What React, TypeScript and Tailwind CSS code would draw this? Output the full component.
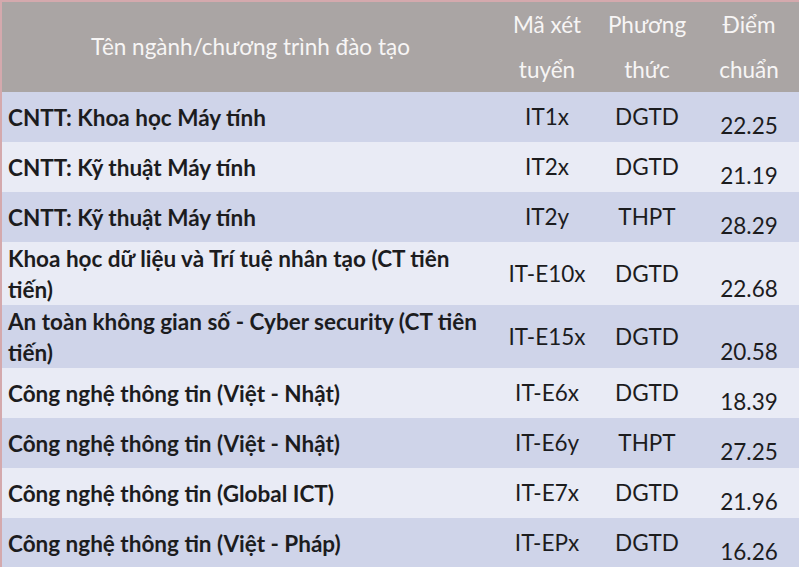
import React from "react";

type Row = { name: React.ReactNode; code: string; method: string; score: string; tall?: boolean };

const rows: Row[] = [
  { name: "CNTT: Khoa học Máy tính", code: "IT1x", method: "DGTD", score: "22.25" },
  { name: "CNTT: Kỹ thuật Máy tính", code: "IT2x", method: "DGTD", score: "21.19" },
  { name: "CNTT: Kỹ thuật Máy tính", code: "IT2y", method: "THPT", score: "28.29" },
  {
    name: (
      <>
        Khoa học dữ liệu và Trí tuệ nhân tạo (CT tiên
        <br />
        tiến)
      </>
    ),
    code: "IT-E10x",
    method: "DGTD",
    score: "22.68",
    tall: true,
  },
  {
    name: (
      <>
        An toàn không gian số - Cyber security (CT tiên
        <br />
        tiến)
      </>
    ),
    code: "IT-E15x",
    method: "DGTD",
    score: "20.58",
    tall: true,
  },
  { name: "Công nghệ thông tin (Việt - Nhật)", code: "IT-E6x", method: "DGTD", score: "18.39" },
  { name: "Công nghệ thông tin (Việt - Nhật)", code: "IT-E6y", method: "THPT", score: "27.25" },
  { name: "Công nghệ thông tin (Global ICT)", code: "IT-E7x", method: "DGTD", score: "21.96" },
  { name: "Công nghệ thông tin (Việt - Pháp)", code: "IT-EPx", method: "DGTD", score: "16.26" },
];

export default function App() {
  return (
    <div
      className="w-[799px] h-[567px] overflow-hidden bg-[#e9ebf5] border-l-2 border-t-2 border-[#d4a9ad] text-[#1c1c1e]"
      style={{ fontFamily: "Lato, 'Open Sans', 'Noto Sans', sans-serif" }}
    >
      <table className="w-[797px] border-collapse table-fixed">
        <colgroup>
          <col className="w-[497px]" />
          <col className="w-[96px]" />
          <col className="w-[104px]" />
          <col className="w-[100px]" />
        </colgroup>
        <thead>
          <tr className="bg-[#aaa5a4] text-[#f7f5f5] h-[90px] text-[22.5px]">
            <th className="font-normal text-center align-middle">Tên ngành/chương trình đào tạo</th>
            <th className="font-normal text-center leading-[45px]">Mã xét<br />tuyển</th>
            <th className="font-normal text-center leading-[45px]">Phương<br />thức</th>
            <th className="font-normal text-center leading-[45px]">Điểm<br />chuẩn</th>
          </tr>
        </thead>
        <tbody className="text-[22.5px]">
          {rows.map((r, i) => (
            <tr
              key={i}
              className={`${i % 2 === 0 ? "bg-[#cfd4e9]" : "bg-[#e9ebf5]"} ${r.tall ? "h-[63px]" : "h-[50px]"}`}
            >
              <td className="pl-[6px] pr-1 font-bold leading-[31px] align-middle whitespace-nowrap">{r.name}</td>
              <td className="text-center align-middle whitespace-nowrap">{r.code}</td>
              <td className="text-center align-middle">{r.method}</td>
              <td className="text-center align-bottom pb-[2px] leading-[28px]">{r.score}</td>
            </tr>
          ))}
        </tbody>
      </table>
    </div>
  );
}
